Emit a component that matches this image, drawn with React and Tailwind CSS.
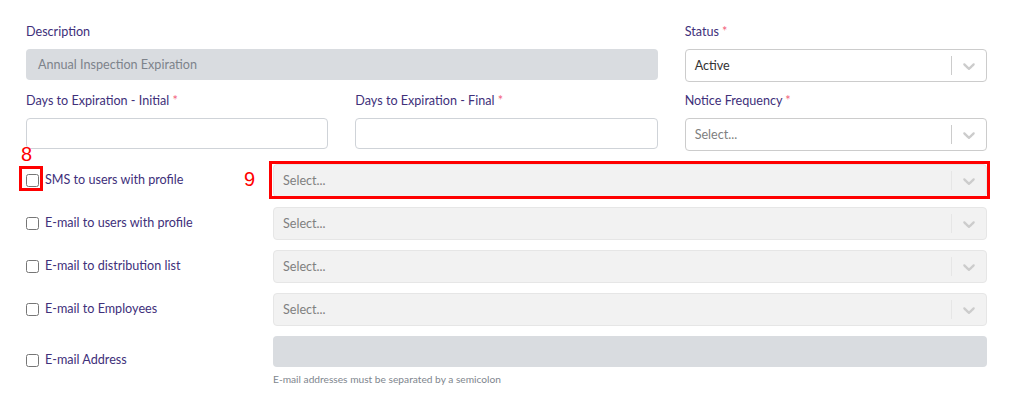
import React from "react";

const font = { fontFamily: "Lato, 'Open Sans', sans-serif" };

function Chevron() {
  return (
    <svg width="20" height="20" viewBox="0 0 20 20" fill="currentColor" aria-hidden="true">
      <path d="M4.516 7.548c0.436-0.446 1.043-0.481 1.576 0l3.908 3.747 3.908-3.747c0.533-0.481 1.141-0.446 1.574 0 0.436 0.445 0.408 1.197 0 1.615-0.406 0.418-4.695 4.502-4.695 4.502-0.217 0.223-0.502 0.335-0.787 0.335s-0.57-0.112-0.789-0.335c0 0-4.287-4.084-4.695-4.502s-0.436-1.17 0-1.615z" />
    </svg>
  );
}

function Label({ children, required }) {
  return (
    <div className="h-[18px] mb-[8px] text-[12.6px] leading-[18px] text-[#40307a]">
      {children}
      {required && <span className="text-[#f2607a]"> *</span>}
    </div>
  );
}

function Select({ value, placeholder, disabled }) {
  return (
    <div
      className={
        "h-[33px] flex items-center rounded-[4px] border " +
        (disabled ? "bg-[#f2f2f2] border-[#e6e6e6]" : "bg-white border-[#cccccc]")
      }
    >
      <div className={"flex-1 pl-[9px] pt-[2px] text-[12.6px] " + (value ? "text-[#333333]" : "text-[#808080]")}>
        {value || placeholder}
      </div>
      <div className={"w-px h-[19px] " + (disabled ? "bg-[#e6e6e6]" : "bg-[#cccccc]")} />
      <div className="px-[7px] flex items-center text-[#cccccc]">
        <Chevron />
      </div>
    </div>
  );
}

function TextInput() {
  return <div className="h-[31px] rounded-[4px] border border-[#cfd3d8] bg-white" />;
}

function CheckRow({ label, children, annotate }) {
  return (
    <div className="flex items-center">
      <div className="w-[247px] flex items-center">
        <div className="relative flex items-center">
          <input type="checkbox" className="w-[13px] h-[13px] m-0 accent-[#767676]" />
          {annotate && (
            <>
              <div className="absolute left-[-7px] top-[-8px] w-[24px] h-[25px] border-[3px] border-[#ff0000]" />
              <div className="absolute left-[-5px] top-[-30px] text-[20px] leading-[20px] text-[#ff0000]" style={{ fontFamily: "'Liberation Sans', sans-serif" }}>8</div>
            </>
          )}
        </div>
        <span className="ml-[6px] text-[12.6px] text-[#40307a]">{label}</span>
      </div>
      <div className="flex-1 relative">
        {children}
        {annotate && (
          <>
            <div className="absolute left-[-4px] top-[-3px] right-[-3px] bottom-[-2px] border-[3px] border-[#ff0000]" />
            <div className="absolute left-[-29px] top-[5px] text-[20px] leading-[20px] text-[#ff0000]" style={{ fontFamily: "'Liberation Sans', sans-serif" }}>9</div>
          </>
        )}
      </div>
    </div>
  );
}

export default function App() {
  return (
    <div className="w-[1015px] h-[407px] bg-white pl-[26px] pr-[28px] pt-[23px]" style={font}>
      <div className="grid grid-cols-3 gap-x-[27px]">
        <div className="col-span-2">
          <Label>Description</Label>
          <div className="h-[31px] rounded-[4px] bg-[#d9dce0] flex items-center pl-[12px] pt-[2px] text-[12.6px] text-[#7d838b]">
            Annual Inspection Expiration
          </div>
        </div>
        <div>
          <Label required>Status</Label>
          <Select value="Active" />
        </div>
      </div>
      <div className="grid grid-cols-3 gap-x-[27px] mt-[10px]">
        <div>
          <Label required>Days to Expiration - Initial</Label>
          <TextInput />
        </div>
        <div>
          <Label required>Days to Expiration - Final</Label>
          <TextInput />
        </div>
        <div>
          <Label required>Notice Frequency</Label>
          <Select placeholder="Select..." />
        </div>
      </div>
      <div className="mt-[13px] flex flex-col gap-[10px]">
        <CheckRow label="SMS to users with profile" annotate>
          <Select placeholder="Select..." disabled />
        </CheckRow>
        <CheckRow label="E-mail to users with profile">
          <Select placeholder="Select..." disabled />
        </CheckRow>
        <CheckRow label="E-mail to distribution list">
          <Select placeholder="Select..." disabled />
        </CheckRow>
        <CheckRow label="E-mail to Employees">
          <Select placeholder="Select..." disabled />
        </CheckRow>
        <CheckRow label="E-mail Address">
          <div>
            <div className="h-[31px] rounded-[4px] bg-[#d9dce0]" />
            <div className="mt-[6px] text-[10.2px] leading-[12px] text-[#80868e]">
              E-mail addresses must be separated by a semicolon
            </div>
          </div>
        </CheckRow>
      </div>
    </div>
  );
}
